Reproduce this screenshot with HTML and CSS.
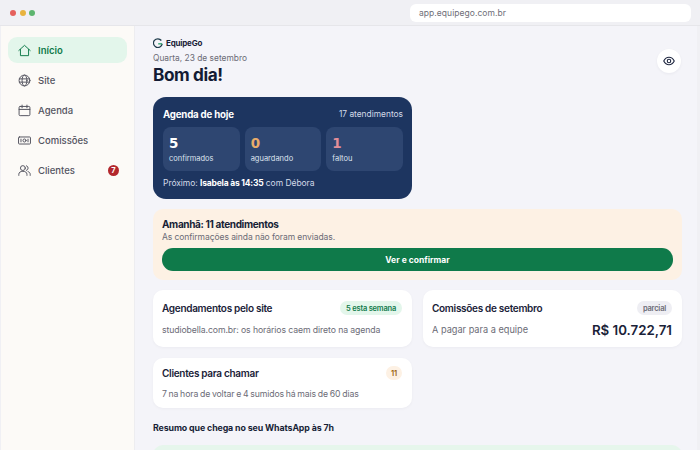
FILE: index.html
```html
<!doctype html>
<html lang="pt-BR">
<head>
	<meta charset="UTF-8">
	<title>EquipeGo</title>
	<link rel="stylesheet" href="styles.css">
</head>
<body>
	<div class="barra">
		<div class="luzes"><span class="luz vermelha"></span><span class="luz amarela"></span><span class="luz verde"></span></div>
		<div class="url">app.equipego.com.br</div>
	</div>
	<div class="janela">
		<nav class="lateral">
			<a class="item ativo">
				<svg viewBox="0 0 24 24" class="ico"><path d="M1.500 12 12 2.500 22.500 12"/><path d="M4.500 10V21.500h15V10"/></svg>
				Início
			</a>
			<a class="item">
				<svg viewBox="0 0 24 24" class="ico"><circle cx="12" cy="12" r="10"/><ellipse cx="12" cy="12" rx="4.500" ry="10"/><path d="M2.500 9h19M2.500 15h19"/></svg>
				Site
			</a>
			<a class="item">
				<svg viewBox="0 0 24 24" class="ico"><rect x="2" y="4.500" width="20" height="17" rx="2"/><path d="M2 10h20M7.500 2v5M16.500 2v5"/></svg>
				Agenda
			</a>
			<a class="item">
				<svg viewBox="0 0 24 24" class="ico"><rect x="1" y="5.500" width="22" height="13" rx="1.500"/><circle cx="12" cy="12" r="2.800"/><path d="M5.500 9.500v5M18.500 9.500v5"/></svg>
				Comissões
			</a>
			<a class="item">
				<svg viewBox="0 0 24 24" class="ico"><circle cx="9" cy="7.500" r="4.500"/><path d="M1.500 21v-2c0-3.500 3-5.500 7.500-5.500s7.500 2 7.500 5.500v2"/><path d="M15.500 3.200a4.500 4.500 0 0 1 0 8.600M18.500 14c2.500.8 4 2.500 4 5v2"/></svg>
				Clientes
				<span class="contador">7</span>
			</a>
		</nav>
		<main class="conteudo">
			<header class="topo">
				<div>
					<div class="marca">
						<svg viewBox="0 0 24 24" class="logo"><path class="logo-arco" d="M20 6A10.500 10.500 0 1 0 22 14"/><path class="logo-traco" d="M22 14H12.500"/></svg>
						EquipeGo
					</div>
					<div class="data">Quarta, 23 de setembro</div>
					<h1>Bom dia!</h1>
				</div>
				<button class="olho">
					<svg viewBox="0 0 24 24"><path d="M1.500 12c2.500-5 6.500-7.500 10.500-7.500s8 2.500 10.500 7.500c-2.500 5-6.500 7.500-10.500 7.500s-8-2.500-10.500-7.500z"/><circle cx="12" cy="12" r="3.500"/></svg>
				</button>
			</header>

			<section class="agenda">
				<div class="agenda-topo">
					<strong>Agenda de hoje</strong>
					<span>17 atendimentos</span>
				</div>
				<div class="numeros">
					<div class="numero"><b>5</b><span>confirmados</span></div>
					<div class="numero"><b class="laranja">0</b><span>aguardando</span></div>
					<div class="numero"><b class="rosa">1</b><span>faltou</span></div>
				</div>
				<p class="proximo">Próximo: <strong>Isabela às 14:35</strong> com Débora</p>
			</section>

			<section class="amanha">
				<h2>Amanhã: 11 atendimentos</h2>
				<p>As confirmações ainda não foram enviadas.</p>
				<button class="confirmar">Ver e confirmar</button>
			</section>

			<div class="colunas">
				<div class="coluna">
					<div class="cartao alto">
						<div class="cartao-topo"><h3>Agendamentos pelo site</h3><span class="selo selo-verde">5 esta semana</span></div>
						<p>studiobella.com.br: os horários caem direto na agenda</p>
					</div>
					<div class="cartao">
						<div class="cartao-topo"><h3>Clientes para chamar</h3><span class="selo selo-laranja">11</span></div>
						<p class="curto">7 na hora de voltar e 4 sumidos há mais de 60 dias</p>
					</div>
				</div>
				<div class="coluna">
					<div class="cartao alto">
						<div class="cartao-topo"><h3>Comissões de setembro</h3><span class="selo selo-cinza">parcial</span></div>
						<div class="valor-linha"><p>A pagar para a equipe</p><strong>R$ 10.722,71</strong></div>
					</div>
				</div>
			</div>

			<h4>Resumo que chega no seu WhatsApp às 7h</h4>
			<div class="resumo"></div>
		</main>
	</div>
</body>
</html>
```

FILE: styles.css
```css
*{
	margin:0;
	box-sizing:border-box;
	font-family: Inter, "Liberation Sans", sans-serif;
}
html, body{
	height:100%;
	overflow:hidden;
}
body{
	background:#F0F0F4;
	display:flex;
	flex-direction:column;
}
.barra{
	height:26px;
	flex:none;
	display:flex;
	align-items:center;
	justify-content:space-between;
	padding:0 9px 0 10px;
	border-bottom:1px solid #E6E6EA;
}
.luzes{
	display:flex;
	gap:3.500px;
}
.luz{
	width:6px;
	height:6px;
	border-radius:50%;
}
.vermelha{background:#E5605C;}
.amarela{background:#E8B33F;}
.verde{background:#5DB56F;}
.url{
	width:281px;
	height:18px;
	margin-top:1px;
	background:#FFFFFF;
	border-radius:6px;
	color:#6E6E78;
	font-size:8.500px;
	letter-spacing:0.05px;
	line-height:18px;
	padding-left:9px;
}
.janela{
	flex:1;
	display:flex;
	min-height:0;
	padding:0 3px 0 1px;
}
.lateral{
	width:134px;
	flex:none;
	background:#FCFAF7;
	border-right:1px solid #EDEDF0;
	padding:11px 7px;
	display:flex;
	flex-direction:column;
	gap:4px;
}
.item{
	height:26px;
	display:flex;
	align-items:center;
	gap:7px;
	padding:0 8px 0 10px;
	color:#53535F;
	font-size:9.500px;
	font-weight:500;
}
.ativo{
	background:#E3F6EB;
	color:#0F7A4A;
	font-weight:600;
	border-radius:9px;
}
.ico{
	width:13px;
	height:13px;
	fill:none;
	stroke:currentColor;
	stroke-width:1.800;
	stroke-linejoin:round;
	stroke-linecap:round;
	flex:none;
}
.contador{
	margin-left:auto;
	width:11px;
	height:11px;
	border-radius:50%;
	background:#B3272D;
	color:#FFFFFF;
	font-size:7.500px;
	font-weight:700;
	line-height:11px;
	text-align:center;
}
.conteudo{
	flex:1;
	min-width:0;
	overflow:hidden;
	background:#F4F4F9;
	padding:10px 15px 0 18px;
}
.topo{
	display:flex;
	align-items:center;
	justify-content:space-between;
	margin-bottom:12px;
}
.marca{
	display:flex;
	align-items:center;
	gap:3px;
	font-size:8px;
	font-weight:700;
	letter-spacing:-0.2px;
	color:#1A2238;
	height:13px;
}
.logo{
	width:10px;
	height:10px;
	fill:none;
	stroke-width:3;
}
.logo-arco{stroke:#1D3A4A;}
.logo-traco{stroke:#1F9D63;}
.data{
	font-size:8.400px;
	color:#6B6B76;
	margin-top:2px;
	line-height:14px;
}
h1{
	font-size:17.200px;
	font-weight:700;
	letter-spacing:-0.4px;
	color:#131B34;
	line-height:20px;
}
.olho{
	width:24px;
	height:24px;
	margin-right:1px;
	border:0;
	border-radius:50%;
	background:#FFFFFF;
	padding:0;
	display:flex;
	align-items:center;
	justify-content:center;
	box-shadow:0 1px 3px rgba(20,25,50,.05);
}
.olho svg{
	width:12px;
	height:12px;
	fill:none;
	stroke:#1F2740;
	stroke-width:2.200;
}
.agenda{
	width:259px;
	background:#1D3560;
	border-radius:13px;
	padding:10px 9px 9px 10px;
	color:#FFFFFF;
}
.agenda-topo{
	display:flex;
	justify-content:space-between;
	align-items:center;
	height:14px;
}
.agenda-topo strong{
	font-size:9.700px;
	font-weight:700;
	letter-spacing:-0.2px;
}
.agenda-topo span{
	font-size:8.400px;
	color:#D3DAE8;
}
.numeros{
	display:grid;
	grid-template-columns:repeat(3,1fr);
	gap:5px;
	margin-top:6px;
}
.numero{
	background:#2E4671;
	border-radius:8px;
	height:44px;
	padding:8px 6px;
	display:flex;
	flex-direction:column;
	justify-content:flex-start;
}
.numero b{
	font-size:13.500px;
	font-family:"DejaVu Sans", sans-serif;
	font-weight:700;
	line-height:17px;
}
.numero span{
	font-size:7.500px;
	color:#DDE3EE;
	margin-top:2px;
	line-height:10px;
}
.laranja{color:#E9AC6A;}
.rosa{color:#E28E98;}
.proximo{
	font-size:8.500px;
	letter-spacing:-0.05px;
	color:#D3DAE8;
	margin-top:5px;
	line-height:14px;
}
.proximo strong{
	color:#FFFFFF;
	font-weight:700;
	letter-spacing:-0.2px;
}
.amanha{
	margin-top:10px;
	background:#FDF1E4;
	border-radius:10px;
	padding:9px;
}
.amanha h2{
	font-size:10px;
	font-weight:700;
	letter-spacing:-0.35px;
	color:#171E36;
	line-height:13px;
}
.amanha p{
	font-size:8.500px;
	letter-spacing:-0.07px;
	color:#6B6B76;
	line-height:13px;
}
.confirmar{
	display:block;
	width:100%;
	height:23px;
	margin-top:4px;
	border:0;
	border-radius:11px;
	background:#0F7A4A;
	color:#FFFFFF;
	font-size:8.500px;
	font-weight:700;
}
.colunas{
	display:grid;
	grid-template-columns:1fr 1fr;
	gap:11px;
	margin-top:10px;
	align-items:start;
}
.coluna{
	display:flex;
	flex-direction:column;
	gap:11px;
}
.cartao{
	background:#FFFFFF;
	border-radius:10px;
	padding:8px 9px;
	box-shadow:0 1px 3px rgba(20,25,50,.04);
}
.alto{
	padding:11px 9px;
}
.cartao-topo{
	display:flex;
	justify-content:space-between;
	align-items:center;
	height:14px;
}
.cartao h3{
	font-size:10px;
	font-weight:600;
	letter-spacing:-0.3px;
	color:#1A2238;
}
.cartao p{
	font-size:8.700px;
	letter-spacing:-0.1px;
	color:#6B6B76;
	line-height:12px;
}
.cartao > p{
	margin-top:8px;
}
.alto > p{
	margin-top:9px;
}
.cartao .curto{
	word-spacing:-0.6px;
}
.selo{
	font-size:7.500px;
	font-weight:600;
	letter-spacing:-0.2px;
	border-radius:7px;
	padding:1.500px 6px;
	margin-right:1px;
	line-height:11px;
}
.selo-verde{background:#E3F6EB;color:#0F7A4A;}
.selo-laranja{background:#FDF1E4;color:#9A6514;padding:1.500px 5px;}
.selo-cinza{background:#EEEEF3;color:#6B6B76;}
.valor-linha{
	display:flex;
	justify-content:space-between;
	align-items:center;
	height:12px;
	margin-top:9px;
}
.valor-linha p{
	font-size:9.200px;
	letter-spacing:0;
}
.valor-linha strong{
	font-size:13.300px;
	font-weight:600;
	color:#1A2238;
	padding-right:1px;
}
h4{
	font-size:8.800px;
	font-weight:700;
	letter-spacing:-0.1px;
	color:#171E36;
	margin-top:14px;
	line-height:12px;
}
.resumo{
	height:40px;
	margin-top:11px;
	background:#E6F6EC;
	border-radius:10px;
}
```
